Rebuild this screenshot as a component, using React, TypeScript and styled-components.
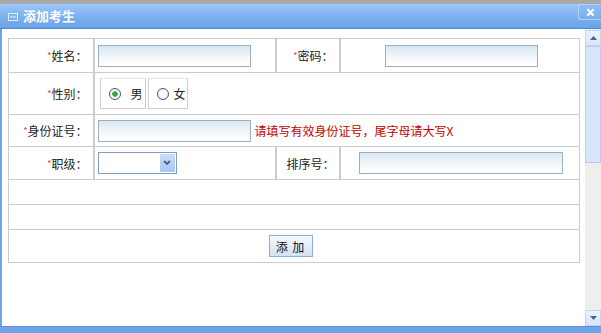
import styled, { createGlobalStyle } from 'styled-components';

const GlobalStyle = createGlobalStyle`
   html, body { margin: 0; padding: 0; background: #fff; }
   body { font-family: "Noto Sans CJK SC", "Liberation Sans", sans-serif; font-size: 12px; color: #333; }
`;

export default function App() {

   return (
      <>
         <GlobalStyle />
         <Window>
            <TopStrip />
            <TitleBar>
               <TitleIcon viewBox="0 0 10 8" width="10" height="8">
                  <rect x="0.5" y="0.5" width="9" height="7" fill="none" stroke="#e4f0ff" />
                  <line x1="2" y1="4" x2="8" y2="4" stroke="#e4f0ff" />
               </TitleIcon>
               <Title>添加考生</Title>
               <CloseButton>
                  <svg viewBox="0 0 10 10" width="9" height="9">
                     <path d="M1.5 1.5 L8.5 8.5 M8.5 1.5 L1.5 8.5" stroke="#fff" strokeWidth="2.4" />
                  </svg>
               </CloseButton>
            </TitleBar>
            <Body>
               <Content>
                  <FormTable>
                     <colgroup>
                        <col style={{ width: 85 }} />
                        <col style={{ width: 182 }} />
                        <col style={{ width: 64 }} />
                        <col />
                     </colgroup>
                     <tbody>
                        <Row $h={34}>
                           <Label><Star>*</Star>姓名：</Label>
                           <Field><TextInput /></Field>
                           <Label><Star>*</Star>密码：</Label>
                           <Field $center><TextInput type="password" /></Field>
                        </Row>
                        <Row $h={42}>
                           <Label><Star>*</Star>性别：</Label>
                           <Field colSpan={3}>
                              <RadioGroup>
                                 <RadioBox $w={46}>
                                    <RadioDot $checked />
                                    <RadioText $gap={10}>男</RadioText>
                                 </RadioBox>
                                 <RadioBox $w={40}>
                                    <RadioDot />
                                    <RadioText $gap={5}>女</RadioText>
                                 </RadioBox>
                              </RadioGroup>
                           </Field>
                        </Row>
                        <Row $h={32}>
                           <Label><Star>*</Star>身份证号：</Label>
                           <Field colSpan={3}>
                              <TextInput />
                              <Hint>请填写有效身份证号，尾字母请大写X</Hint>
                           </Field>
                        </Row>
                        <Row $h={33}>
                           <Label><Star>*</Star>职级：</Label>
                           <Field>
                              <SelectBox>
                                 <select />
                                 <SelectArrow>
                                    <svg viewBox="0 0 8 6" width="8" height="6">
                                       <path d="M1 1 L4 4 L7 1" fill="none" stroke="#4d6185" strokeWidth="1.8" />
                                    </svg>
                                 </SelectArrow>
                              </SelectBox>
                           </Field>
                           <Label $plain>排序号：</Label>
                           <Field $center><TextInput $w={204} /></Field>
                        </Row>
                        <Row $h={25}><Field colSpan={4} /></Row>
                        <Row $h={25}><Field colSpan={4} /></Row>
                        <Row $h={33}>
                           <Field colSpan={4} $center>
                              <SubmitButton>添 加</SubmitButton>
                           </Field>
                        </Row>
                     </tbody>
                  </FormTable>
               </Content>
               <ScrollBar>
                  <ScrollButton>
                     <svg viewBox="0 0 7 4" width="7" height="4"><path d="M0 4 L3.5 0 L7 4 Z" fill="#4d6185" /></svg>
                  </ScrollButton>
                  <ScrollThumb />
                  <ScrollTrack />
                  <ScrollButton>
                     <svg viewBox="0 0 7 4" width="7" height="4"><path d="M0 0 L3.5 4 L7 0 Z" fill="#4d6185" /></svg>
                  </ScrollButton>
               </ScrollBar>
            </Body>
            <BottomBar />
         </Window>
      </>
   );

}

const Window = styled.div`
   width: 601px;
   height: 333px;
   display: flex;
   flex-direction: column;
   overflow: hidden;
`;

const TopStrip = styled.div`
   height: 4px;
   background: #a9a9a9;
   flex: none;
`;

const TitleBar = styled.div`
   height: 24px;
   flex: none;
   display: flex;
   align-items: center;
   background: linear-gradient(#9ec8f8, #7db1f0 50%, #6aa2ea);
   border-bottom: 1px solid #4f86d2;
   padding-left: 8px;
`;

const TitleIcon = styled.svg`
   display: block;
   margin-top: 1px;
`;

const Title = styled.span`
   margin-left: 5px;
   color: #fff;
   font-weight: bold;
   font-size: 13px;
   line-height: 24px;
`;

const CloseButton = styled.div`
   margin-left: auto;
   margin-top: -8px;
   width: 22px;
   height: 14px;
   display: flex;
   align-items: center;
   justify-content: center;
   border: 1px solid #b4d2f8;
   border-right: none;
   border-radius: 3px 0 0 3px;
   background: linear-gradient(#8ebdf6, #78acef);
`;

const Body = styled.div`
   flex: 1;
   display: flex;
   min-height: 0;
`;

const Content = styled.div`
   flex: 1;
   border-left: 2px solid #6fa4ea;
   padding: 9px 5px 0 6px;
`;

const FormTable = styled.table`
   width: 572px;
   border-collapse: collapse;
   border: 1px solid #cccccc;
   table-layout: fixed;
`;

const Row = styled.tr<{ $h: number }>`
   height: ${p => p.$h}px;
   border-bottom: 1px solid #cccccc;
`;

const Label = styled.td<{ $plain?: boolean }>`
   text-align: right;
   padding: 0 5px 0 0;
   border-right: 2px solid #cccccc;
   white-space: nowrap;
   font-size: 12px;
   color: #222;
   ${p => p.$plain && 'padding-right: 4px;'}
`;

const Field = styled.td<{ $center?: boolean }>`
   padding: 0 0 0 3px;
   text-align: ${p => p.$center ? 'center' : 'left'};
   border-right: 2px solid #cccccc;
   white-space: nowrap;
   &:last-child { border-right: none; }
`;

const Star = styled.span`
   color: #e43a3a;
   font-size: 9px;
   vertical-align: 2px;
`;

const TextInput = styled.input<{ $w?: number }>`
   box-sizing: border-box;
   width: ${p => p.$w ?? 153}px;
   height: 22px;
   border: 1px solid #9ab0bd;
   background: linear-gradient(#d9e7f2, #f4f8fb 60%, #ffffff);
   vertical-align: middle;
   padding: 0 3px;
   outline: none;
`;

const Hint = styled.span`
   margin-left: 4px;
   color: #c40000;
   font-size: 12px;
   vertical-align: middle;
`;

const RadioGroup = styled.div`
   display: flex;
   gap: 2px;
   padding-left: 2px;
`;

const RadioBox = styled.div<{ $w: number }>`
   box-sizing: border-box;
   width: ${p => p.$w}px;
   height: 31px;
   border: 1px solid #cfcfcf;
   border-top-color: #e4e4e4;
   display: flex;
   align-items: center;
   padding-left: 8px;
`;

const RadioDot = styled.span<{ $checked?: boolean }>`
   box-sizing: border-box;
   width: 12px;
   height: 12px;
   border-radius: 50%;
   border: 1px solid #3c5f86;
   background: ${p => p.$checked
      ? 'radial-gradient(circle, #3aa93a 0 2.5px, #ffffff 3px, #dfe8f2 100%)'
      : 'radial-gradient(circle, #ffffff 0 2px, #dfe8f2 100%)'};
   flex: none;
`;

const RadioText = styled.span<{ $gap: number }>`
   margin-left: ${p => p.$gap}px;
   font-size: 12px;
   color: #222;
`;

const SelectBox = styled.div`
   position: relative;
   display: inline-block;
   vertical-align: middle;
   width: 79px;
   height: 22px;

   select {
      box-sizing: border-box;
      width: 100%;
      height: 100%;
      border: 1px solid #7f9db9;
      background: #fff;
      appearance: none;
      outline: none;
   }
`;

const SelectArrow = styled.span`
   position: absolute;
   top: 2px;
   right: 2px;
   width: 15px;
   height: 18px;
   display: flex;
   align-items: center;
   justify-content: center;
   background: linear-gradient(#c9dcfb, #aac6f4);
   border-radius: 1px;
   pointer-events: none;
`;

const SubmitButton = styled.button`
   box-sizing: border-box;
   width: 44px;
   height: 22px;
   padding: 0;
   border: 1px solid #8db0d9;
   background: linear-gradient(#f6f9fd, #e3edf8 50%, #d2e2f4);
   font-family: "Noto Sans CJK SC", sans-serif;
   font-size: 12px;
   letter-spacing: 1px;
   color: #111;
   margin-right: 10px;
`;

const ScrollBar = styled.div`
   width: 16px;
   flex: none;
   display: flex;
   flex-direction: column;
   background: #eeeeee;
   padding-top: 1px;
`;

const ScrollButton = styled.div`
   box-sizing: border-box;
   height: 16px;
   flex: none;
   display: flex;
   align-items: center;
   justify-content: center;
   background: linear-gradient(#eaf2fd, #d8e6fa);
   border: 1px solid #c3d6f0;
`;

const ScrollThumb = styled.div`
   box-sizing: border-box;
   height: 117px;
   flex: none;
   background: #d7e6fb;
   border: 1px solid #b7cdea;
`;

const ScrollTrack = styled.div`
   flex: 1;
`;

const BottomBar = styled.div`
   height: 6px;
   flex: none;
   background: #6fa4ea;
   border-top: 1px solid #5a90dc;
`;
